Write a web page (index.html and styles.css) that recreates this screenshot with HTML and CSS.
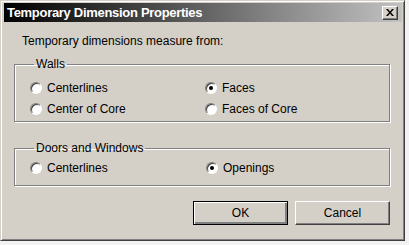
FILE: index.html
```html
<!DOCTYPE html>
<html lang="en">
<head>
    <meta charset="UTF-8">
    <title>Temporary Dimension Properties</title>
    <link rel="stylesheet" href="styles.css">
</head>
<body>
<div class="window">
    <div class="titlebar">
        <span class="title">Temporary Dimension Properties</span>
        <button class="close" aria-label="Close">
            <svg width="8" height="7" viewBox="0 0 8 7">
                <path d="M0 0h2l2 2.5 2-2.5h2l-3 3.5 3 3.5h-2l-2-2.5-2 2.5h-2l3-3.5z" fill="#000"/>
            </svg>
        </button>
    </div>

    <div class="content">
        <p class="intro">Temporary dimensions measure from:</p>

        <fieldset class="group walls">
            <legend>Walls</legend>
            <div class="options">
                <label class="radio"><span class="dot"></span>Centerlines</label>
                <label class="radio checked"><span class="dot"></span>Faces</label>
                <label class="radio"><span class="dot"></span>Center of Core</label>
                <label class="radio"><span class="dot"></span>Faces of Core</label>
            </div>
        </fieldset>

        <fieldset class="group openings">
            <legend>Doors and Windows</legend>
            <div class="options">
                <label class="radio"><span class="dot"></span>Centerlines</label>
                <label class="radio checked"><span class="dot"></span>Openings</label>
            </div>
        </fieldset>

        <div class="actions">
            <button class="btn default">OK</button>
            <button class="btn">Cancel</button>
        </div>
    </div>
</div>
</body>
</html>
```

FILE: styles.css
```css
:root {
    --face: #d4d0c8;
    --shadow: #808080;
    --dark: #404040;
    --light: #ffffff;
    --font-family: "Liberation Sans", Arial, sans-serif;
}
body {
    margin: 0;
    background-color: #f2f2f2;
    font-family: var(--font-family);
    font-size: 12px;
    color: #000;
}
.window {
    width: 405px;
    height: 241px;
    box-sizing: border-box;
    background-color: var(--face);
    border-top: 1px solid var(--face);
    border-left: 1px solid var(--face);
    border-right: 1px solid var(--dark);
    border-bottom: 1px solid var(--dark);
    box-shadow: inset 1px 1px 0 var(--light), inset -1px -1px 0 var(--shadow);
    padding: 2px 2px 0 3px;
    display: flex;
    flex-direction: column;
}
.titlebar {
    height: 19px;
    display: flex;
    align-items: center;
    justify-content: space-between;
    padding: 0 4px 0 3px;
    background: linear-gradient(to right, #000 0%, #3a3a3a 30%, #8a8a8a 70%, #c2c2c2 100%);
}
.title {
    color: #fff;
    font-weight: bold;
    font-size: 13px;
    letter-spacing: -0.3px;
}
.close {
    width: 16px;
    height: 14px;
    padding: 0;
    display: flex;
    align-items: center;
    justify-content: center;
    background-color: var(--face);
    border: 1px solid;
    border-color: var(--light) var(--dark) var(--dark) var(--light);
    box-shadow: inset -1px -1px 0 var(--shadow);
}
.content {
    flex: 1;
    padding: 0 12px 0 10px;
    display: flex;
    flex-direction: column;
}
.intro {
    margin: 12px 0 0 8px;
    line-height: 14px;
}
.group {
    margin: 9px 0 0 0;
    padding: 6px 0 2px 15px;
    border: 1px solid var(--shadow);
    box-shadow: 1px 1px 0 var(--light), inset 1px 1px 0 var(--light);
}
.group legend {
    padding: 0 2px;
    margin-left: 4px;
    line-height: 14px;
}
.openings {
    margin-top: 19px;
    padding: 2px 0 7px 15px;
}
.options {
    display: grid;
    grid-template-columns: 175px 1fr;
}
.openings .options {
    grid-template-columns: 176px 1fr;
}
.radio {
    height: 21px;
    display: flex;
    align-items: center;
    gap: 5px;
}
.dot {
    width: 12px;
    height: 12px;
    box-sizing: border-box;
    border-radius: 50%;
    border: 1px solid;
    border-color: var(--shadow) var(--light) var(--light) var(--shadow);
    background: radial-gradient(circle at 60% 60%, #fff 40%, #ececec 100%);
    box-shadow: inset 1px 1px 0 var(--dark);
    display: flex;
    align-items: center;
    justify-content: center;
}
.radio.checked .dot::after {
    content: "";
    width: 4px;
    height: 4px;
    border-radius: 50%;
    background-color: #000;
}
.actions {
    margin-top: 15px;
    display: flex;
    justify-content: flex-end;
    gap: 7px;
}
.btn {
    width: 95px;
    height: 24px;
    padding: 0;
    font-family: var(--font-family);
    font-size: 12px;
    background-color: var(--face);
    border: 1px solid;
    border-color: var(--light) var(--dark) var(--dark) var(--light);
    box-shadow: inset -1px -1px 0 var(--shadow);
}
.btn.default {
    border: 1px solid #000;
    box-shadow: inset 1px 1px 0 var(--light), inset -2px -2px 0 var(--shadow);
}
```
